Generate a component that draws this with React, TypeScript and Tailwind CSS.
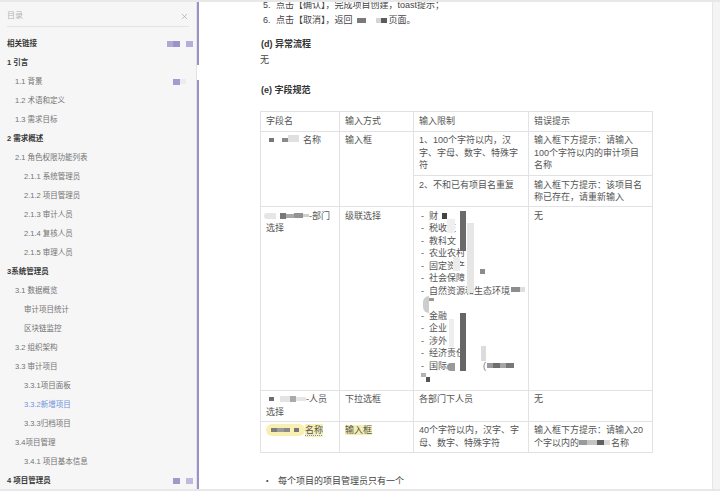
import { X } from "lucide-react"

type TocItem = {
  label: string
  level: 0 | 1 | 2
  bold?: boolean
  active?: boolean
  marks?: "links" | "one" | "two"
}

const toc: TocItem[] = [
  { label: "相关链接", level: 0, bold: true, marks: "links" },
  { label: "1 引言", level: 0, bold: true },
  { label: "1.1 背景", level: 1, marks: "one" },
  { label: "1.2 术语和定义", level: 1 },
  { label: "1.3 需求目标", level: 1 },
  { label: "2 需求概述", level: 0, bold: true },
  { label: "2.1 角色权限功能列表", level: 1 },
  { label: "2.1.1 系统管理员", level: 2 },
  { label: "2.1.2 项目管理员", level: 2 },
  { label: "2.1.3 审计人员", level: 2 },
  { label: "2.1.4 复核人员", level: 2 },
  { label: "2.1.5 审理人员", level: 2 },
  { label: "3系统管理员", level: 0, bold: true },
  { label: "3.1 数据概览", level: 1 },
  { label: "审计项目统计", level: 2 },
  { label: "区块链监控", level: 2 },
  { label: "3.2 组织架构", level: 1 },
  { label: "3.3 审计项目", level: 1 },
  { label: "3.3.1项目面板", level: 2 },
  { label: "3.3.2新增项目", level: 2, active: true },
  { label: "3.3.3归档项目", level: 2 },
  { label: "3.4项目管理", level: 1 },
  { label: "3.4.1 项目基本信息", level: 2 },
  { label: "4 项目管理员", level: 0, bold: true, marks: "two" },
]

const indent = ["pl-[7px]", "pl-[15px]", "pl-[24px]"]

// blurred-out bits of the original screenshot
function Px({ className }: { className: string }) {
  return <span className={`inline-block align-middle ${className}`} />
}

function Marks({ kind }: { kind: TocItem["marks"] }) {
  if (kind === "links")
    return (
      <span className="ml-auto flex items-center">
        <Px className="h-[6px] w-[6px] bg-[#b0a9d6]" />
        <Px className="h-[6px] w-[7px] bg-[#9c93ca]" />
        <Px className="ml-[6px] h-[6px] w-[7px] bg-[#b5aed9]" />
      </span>
    )
  if (kind === "one")
    return (
      <span className="ml-auto mr-[7px] flex items-center">
        <Px className="h-[6px] w-[7px] bg-[#a49bd0]" />
        <Px className="h-[5px] w-[6px] bg-[#ececec]" />
      </span>
    )
  return (
    <span className="ml-auto flex items-center">
      <Px className="h-[6px] w-[7px] bg-[#a198ce]" />
      <Px className="ml-[6px] h-[6px] w-[7px] bg-[#c0badf]" />
    </span>
  )
}

function Sidebar() {
  return (
    <aside className="flex h-full w-[197px] shrink-0 flex-col border-r border-[#e3e3e3] bg-[#f6f6f6]">
      <div className="mx-[7px] flex items-center justify-between border-b border-[#e4e4e4] pt-[8px] pb-[4px] text-[8px] leading-[12px] text-[#b4b4b4]">
        <span>目录</span>
        <X size={9} strokeWidth={1.6} className="text-[#9a9a9a]" />
      </div>
      <ul className="mt-[7px] pr-[3px]">
        {toc.map((item) => (
          <li
            key={item.label}
            className={`flex h-[19px] items-center text-[7.5px] ${indent[item.level]} ${
              item.bold ? "font-bold text-[#383838]" : item.active ? "text-[#6f92dc]" : "text-[#737373]"
            }`}
          >
            <span>{item.label}</span>
            {item.marks && <Marks kind={item.marks} />}
          </li>
        ))}
      </ul>
    </aside>
  )
}

const th = "border border-[#e2e2e2] px-[5px] py-[3px] align-top text-left font-normal"
const td = "border border-[#e2e2e2] px-[5px] py-[2.5px] align-top text-left font-normal"

function FieldTable() {
  return (
    <table className="w-[392px] table-fixed border-collapse text-[9px] leading-[12.5px] text-[#555]">
      <colgroup>
        <col className="w-[79px]" />
        <col className="w-[74px]" />
        <col className="w-[115px]" />
        <col className="w-[124px]" />
      </colgroup>
      <thead>
        <tr>
          <th className={th}>字段名</th>
          <th className={th}>输入方式</th>
          <th className={th}>输入限制</th>
          <th className={th}>错误提示</th>
        </tr>
      </thead>
      <tbody>
        <tr>
          <td className={td} rowSpan={2}>
            <span className="flex items-center whitespace-nowrap">
              <Px className="ml-[3px] h-[4px] w-[5px] bg-[#777]" />
              <Px className="ml-[8px] h-[4px] w-[6px] bg-[#8a8a8a]" />
              <Px className="mb-[4px] h-[7px] w-[11px] bg-[#e0e0e0]" />
              <span className="ml-[4px]">名称</span>
            </span>
          </td>
          <td className={td} rowSpan={2}>输入框</td>
          <td className={`${td} pb-[3.5px]`}>
            1、100个字符以内，汉<br />字、字母、数字、特殊字<br />符
          </td>
          <td className={`${td} pb-[3.5px]`}>
            输入框下方提示：请输入<br />100个字符以内的审计项目<br />名称
          </td>
        </tr>
        <tr>
          <td className={td}>2、不和已有项目名重复</td>
          <td className={td}>
            输入框下方提示：该项目名<br />称已存在，请重新输入
          </td>
        </tr>
        <tr>
          <td className={td}>
            <span className="flex items-center whitespace-nowrap">
              <Px className="ml-[-2px] h-[6px] w-[12px] rounded-l-full bg-[#e6e6e6]" />
              <Px className="ml-[4px] h-[6px] w-[6px] bg-[#777]" />
              <Px className="h-[4px] w-[8px] bg-[#a8a8a8]" />
              <Px className="h-[5px] w-[9px] bg-[#939393]" />
              <Px className="h-[3px] w-[6px] bg-[#cfcfcf]" />
              <span>-部门</span>
            </span>
            选择
          </td>
          <td className={td}>级联选择</td>
          <td className={`${td} relative pb-[5px]`}>
            <ul className="pl-[2px]">
              {[
                "财",
                "税收征",
                "教科文",
                "农业农村",
                "固定资产",
                "社会保障",
                "自然资源和生态环境",
                "",
                "金融",
                "企业",
                "涉外",
                "经济责任",
                "国际",
                "",
              ].map((t, i) => (
                <li key={i} className="flex h-[12.5px] items-center">
                  <span className={`w-[8px] ${t ? "" : "invisible"}`}>-</span>
                  <span>{t}</span>
                </li>
              ))}
            </ul>
            <span className="absolute left-[28px] top-[6px] h-[6px] w-[5px] bg-[#444]" />
            <span className="absolute left-[33px] top-[12px] h-[14px] w-[8px] bg-[#efefef]" />
            <span className="absolute left-[46px] top-[4px] h-[40px] w-[6px] bg-[#6a6a6a]" />
            <span className="absolute left-[53px] top-[16px] h-[70px] w-[7px] bg-[#e6e6e6]" />
            <span className="absolute left-[39px] top-[50px] h-[14px] w-[7px] bg-[#ececec]" />
            <span className="absolute left-[66px] top-[62px] h-[5px] w-[5px] bg-[#8c8c8c]" />
            <span className="absolute left-[97px] top-[80px] h-[5px] w-[9px] bg-[#8d8d8d]" />
            <span className="absolute left-[106px] top-[80px] h-[5px] w-[5px] bg-[#dedede]" />
            <span className="absolute left-[9px] top-[89px] h-[17px] w-[6px] rounded-l-full bg-[#cdcdcd]" />
            <span className="absolute left-[15px] top-[91px] h-[3px] w-[5px] bg-[#9a9a9a]" />
            <span className="absolute left-[46px] top-[106px] h-[58px] w-[6px] bg-[#666]" />
            <span className="absolute left-[35px] top-[112px] h-[28px] w-[5px] bg-[#eeeeee]" />
            <span className="absolute left-[67px] top-[139px] h-[15px] w-[5px] bg-[#dcdcdc]" />
            <span className="absolute left-[33px] top-[156px] h-[8px] w-[8px] rounded-l-full bg-[#9a9a9a]" />
            <span className="absolute left-[69px] top-[153px] text-[#777]">(</span>
            <span className="absolute left-[73px] top-[156px] flex">
              <Px className="h-[5px] w-[6px] bg-[#9a9a9a]" />
              <Px className="h-[5px] w-[7px] bg-[#6f6f6f]" />
              <Px className="h-[5px] w-[6px] bg-[#a5a5a5]" />
              <Px className="h-[5px] w-[8px] bg-[#777]" />
            </span>
            <span className="absolute left-[7px] top-[166px] flex flex-col">
              <Px className="h-[4px] w-[5px] bg-[#b3b3b3]" />
              <Px className="ml-[5px] h-[5px] w-[4px] bg-[#555]" />
            </span>
          </td>
          <td className={td}>无</td>
        </tr>
        <tr>
          <td className={td}>
            <span className="flex items-center whitespace-nowrap">
              <Px className="ml-[3px] h-[4px] w-[5px] bg-[#6e6e6e]" />
              <Px className="ml-[6px] h-[6px] w-[10px] bg-[#e3e3e3]" />
              <Px className="h-[6px] w-[6px] bg-[#aaa]" />
              <Px className="h-[4px] w-[10px] bg-[#e6e6e6]" />
              <span>-人员</span>
            </span>
            选择
          </td>
          <td className={td}>下拉选框</td>
          <td className={td}>各部门下人员</td>
          <td className={td}>无</td>
        </tr>
        <tr>
          <td className={td}>
            <span className="flex items-center whitespace-nowrap">
              <span className="flex h-[12px] items-center rounded-[6px] bg-[#f8efb2] pl-[5px] pr-[6px]">
                <Px className="h-[4px] w-[6px] bg-[#7d7d7d]" />
                <Px className="h-[4px] w-[7px] bg-[#9b9b9b]" />
                <Px className="h-[4px] w-[6px] bg-[#8a8a8a]" />
                <Px className="ml-[4px] h-[4px] w-[5px] bg-[#777]" />
              </span>
              <span className="bg-[#f8efb2] underline decoration-[#6f92dc] decoration-dotted underline-offset-2">名称</span>
            </span>
          </td>
          <td className={td}>
            <span className="bg-[#f6eeae]">输入框</span>
          </td>
          <td className={td}>
            40个字符以内，汉字、字<br />母、数字、特殊字符
          </td>
          <td className={td}>
            输入框下方提示：请输入20
            <br />
            <span className="flex items-center whitespace-nowrap">
              个字以内的
              <Px className="h-[5px] w-[8px] bg-[#9a9a9a]" />
              <Px className="h-[5px] w-[10px] bg-[#c4c4c4]" />
              <Px className="h-[5px] w-[7px] bg-[#606060]" />
              <Px className="h-[5px] w-[6px] bg-[#dadada]" />
              <span className="ml-[1px]">名称</span>
            </span>
          </td>
        </tr>
      </tbody>
    </table>
  )
}

function Content() {
  return (
    <main className="h-full min-w-0 flex-1 overflow-hidden bg-white pl-[61px] text-[9px] text-[#444]">
      <div className="mt-[-4px] pl-[3px] leading-[15px]">
        <div className="flex">
          <span className="w-[13px]">5.</span>
          <span>点击【确认】，完成项目创建，toast提示；</span>
        </div>
        <div className="flex items-center">
          <span className="w-[13px]">6.</span>
          <span>点击【取消】，返回</span>
          <Px className="ml-[4px] h-[5px] w-[9px] bg-[#7a7a7a]" />
          <Px className="ml-[10px] h-[5px] w-[5px] bg-[#d6d6d6]" />
          <Px className="h-[5px] w-[6px] bg-[#5c5c5c]" />
          <span className="ml-[2px]">页面。</span>
        </div>
      </div>
      <h4 className="mt-[8px] pl-[1px] font-bold leading-[16px] text-[#333]">(d) 异常流程</h4>
      <p className="leading-[16px]">无</p>
      <h4 className="mt-[14px] pl-[1px] font-bold leading-[16px] text-[#333]">(e) 字段规范</h4>
      <div className="mt-[13px]">
        <FieldTable />
      </div>
      <div className="mt-[20px] flex items-center leading-[16px]">
        <span className="w-[18px] pl-[6px] text-[7px]">•</span>
        <span>每个项目的项目管理员只有一个</span>
      </div>
    </main>
  )
}

export default function App() {
  return (
    <div className="flex h-[491px] w-[720px] overflow-hidden border-y-2 border-[#e8e8e8] bg-white font-['Liberation_Sans','Noto_Sans_CJK_SC',sans-serif]">
      <Sidebar />
      <div className="flex w-[2px] shrink-0 flex-col">
        <div className="h-[63px] bg-[#9b91c9]" />
        <div className="h-[15px] bg-white" />
        <div className="flex-1 bg-[#9b91c9]" />
      </div>
      <Content />
      <div className="w-[8px] shrink-0 border-l border-[#e6e6e6] bg-[#f4f4f4]" />
    </div>
  )
}
